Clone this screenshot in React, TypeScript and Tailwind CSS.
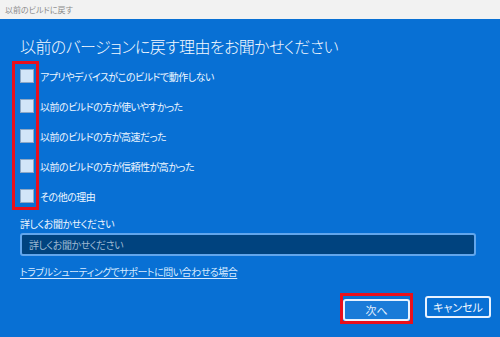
const reasons = [
  'アプリやデバイスがこのビルドで動作しない',
  '以前のビルドの方が使いやすかった',
  '以前のビルドの方が高速だった',
  '以前のビルドの方が信頼性が高かった',
  'その他の理由',
];

const jp = { fontFamily: '"Noto Sans CJK JP", "Noto Sans", sans-serif', fontFeatureSettings: '"palt"' };

export default function App() {
  return (
    <div className="w-[500px] h-[337px] flex flex-col overflow-hidden" style={jp}>
      {/* title bar */}
      <div className="h-[19px] bg-[#f2f2f2] flex items-center px-[5px] text-[8px] text-[#8a8a8a]">
        以前のビルドに戻す
      </div>

      <div className="relative flex-1 bg-[#0870d4] flex flex-col px-5 pt-[15px] text-white">
        <h1 className="text-[16px] leading-[24px] tracking-[-0.6px] font-light text-[#f4f9ff]">
          以前のバージョンに戻す理由をお聞かせください
        </h1>

        {/* annotation box around checkboxes */}
        <div className="absolute left-[12px] top-[42px] w-[27px] h-[149px] border-[3px] border-[#e8101c]" />

        <ul className="mt-[3px] flex flex-col">
          {reasons.map((r) => (
            <li key={r} className="h-[30px] flex items-center gap-[6px]">
              <span className="w-[14px] h-[14px] bg-[#d2e5f8] border border-[#8ea9c6] shrink-0" />
              <span className="text-[10px] tracking-[-0.5px] text-[#eef6ff]">{r}</span>
            </li>
          ))}
        </ul>

        <label className="mt-[5px] text-[10px] tracking-[-0.5px] leading-[16px] text-[#eef6ff]">詳しくお聞かせください</label>
        <div className="mt-[1px] h-[23px] w-[456px] bg-[#00437f] border-2 border-[#62a6ec] rounded-[3px] flex items-center px-[7px] text-[10px] tracking-[-0.5px] text-[#9db8d2]">
          詳しくお聞かせください
        </div>

        <a className="mt-[8px] text-[10px] tracking-[-0.5px] leading-[16px] text-[#d6eaff] underline underline-offset-2 w-fit">
          トラブルシューティングでサポートに問い合わせる場合
        </a>

        <div className="mt-[16px] flex justify-end gap-[15px] -mr-[11px]">
          <div className="relative">
            <div className="absolute -inset-[3px] border-[3px] border-[#e8101c]" />
            <button className="w-[67px] h-[22px] rounded-[3px] border-2 border-[#e8f2ff] bg-[#1a7bd8] text-[11px] text-[#e3f0ff]">
              次へ
            </button>
          </div>
          <button className="w-[66px] h-[22px] rounded-[3px] border-2 border-[#e8f2ff] bg-[#0870d4] text-[11px] text-[#f0f7ff]">
            キャンセル
          </button>
        </div>
      </div>
    </div>
  );
}
